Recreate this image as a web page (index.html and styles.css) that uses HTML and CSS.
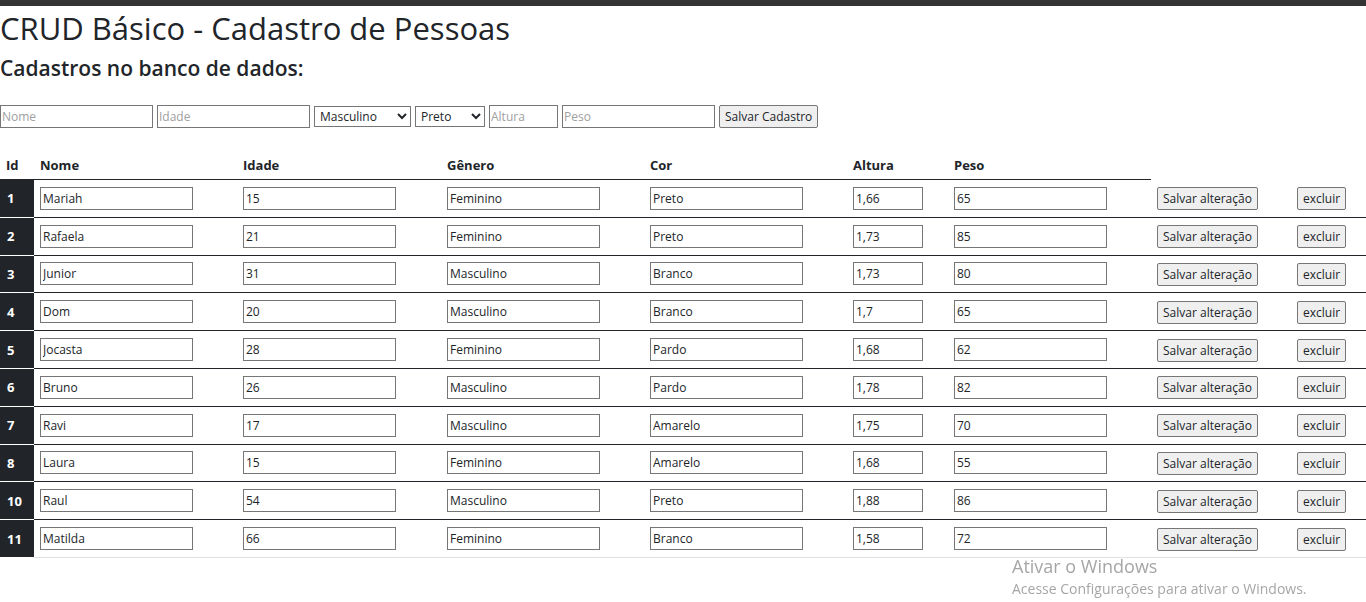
FILE: index.html
```html
<!DOCTYPE html>
<html lang="pt-BR">
<head>
<meta charset="utf-8">
<title>CRUD Básico</title>
<link rel="stylesheet" href="styles.css">
</head>
<body>
<h1 class="title">CRUD Básico - Cadastro de Pessoas</h1>
<h2 class="subtitle">Cadastros no banco de dados:</h2>
<form class="new-form">
  <input class="f-in w153" type="text" placeholder="Nome">
  <input class="f-in w153" type="text" placeholder="Idade">
  <select class="f-sel w97"><option>Masculino</option><option>Feminino</option></select>
  <select class="f-sel w70"><option>Preto</option><option>Branco</option></select>
  <input class="f-in w69" type="text" placeholder="Altura">
  <input class="f-in w153" type="text" placeholder="Peso">
  <button class="btn" type="button">Salvar Cadastro</button>
</form>
<table class="grid">
  <colgroup>
    <col class="c-id"><col class="c-wide"><col class="c-idade"><col class="c-wide"><col class="c-wide"><col class="c-alt"><col class="c-wide"><col class="c-save"><col class="c-del">
  </colgroup>
  <thead>
    <tr><th>Id</th><th>Nome</th><th>Idade</th><th>Gênero</th><th>Cor</th><th>Altura</th><th>Peso</th></tr>
  </thead>
  <tbody>
    <tr><th>1</th><td><input class="t-in" value="Mariah"></td><td><input class="t-in" value="15"></td><td><input class="t-in" value="Feminino"></td><td><input class="t-in" value="Preto"></td><td><input class="t-in sm" value="1,66"></td><td><input class="t-in" value="65"></td><td><button class="btn" type="button">Salvar alteração</button></td><td><button class="btn" type="button">excluir</button></td></tr>
    <tr><th>2</th><td><input class="t-in" value="Rafaela"></td><td><input class="t-in" value="21"></td><td><input class="t-in" value="Feminino"></td><td><input class="t-in" value="Preto"></td><td><input class="t-in sm" value="1,73"></td><td><input class="t-in" value="85"></td><td><button class="btn" type="button">Salvar alteração</button></td><td><button class="btn" type="button">excluir</button></td></tr>
    <tr><th>3</th><td><input class="t-in" value="Junior"></td><td><input class="t-in" value="31"></td><td><input class="t-in" value="Masculino"></td><td><input class="t-in" value="Branco"></td><td><input class="t-in sm" value="1,73"></td><td><input class="t-in" value="80"></td><td><button class="btn" type="button">Salvar alteração</button></td><td><button class="btn" type="button">excluir</button></td></tr>
    <tr><th>4</th><td><input class="t-in" value="Dom"></td><td><input class="t-in" value="20"></td><td><input class="t-in" value="Masculino"></td><td><input class="t-in" value="Branco"></td><td><input class="t-in sm" value="1,7"></td><td><input class="t-in" value="65"></td><td><button class="btn" type="button">Salvar alteração</button></td><td><button class="btn" type="button">excluir</button></td></tr>
    <tr><th>5</th><td><input class="t-in" value="Jocasta"></td><td><input class="t-in" value="28"></td><td><input class="t-in" value="Feminino"></td><td><input class="t-in" value="Pardo"></td><td><input class="t-in sm" value="1,68"></td><td><input class="t-in" value="62"></td><td><button class="btn" type="button">Salvar alteração</button></td><td><button class="btn" type="button">excluir</button></td></tr>
    <tr><th>6</th><td><input class="t-in" value="Bruno"></td><td><input class="t-in" value="26"></td><td><input class="t-in" value="Masculino"></td><td><input class="t-in" value="Pardo"></td><td><input class="t-in sm" value="1,78"></td><td><input class="t-in" value="82"></td><td><button class="btn" type="button">Salvar alteração</button></td><td><button class="btn" type="button">excluir</button></td></tr>
    <tr><th>7</th><td><input class="t-in" value="Ravi"></td><td><input class="t-in" value="17"></td><td><input class="t-in" value="Masculino"></td><td><input class="t-in" value="Amarelo"></td><td><input class="t-in sm" value="1,75"></td><td><input class="t-in" value="70"></td><td><button class="btn" type="button">Salvar alteração</button></td><td><button class="btn" type="button">excluir</button></td></tr>
    <tr><th>8</th><td><input class="t-in" value="Laura"></td><td><input class="t-in" value="15"></td><td><input class="t-in" value="Feminino"></td><td><input class="t-in" value="Amarelo"></td><td><input class="t-in sm" value="1,68"></td><td><input class="t-in" value="55"></td><td><button class="btn" type="button">Salvar alteração</button></td><td><button class="btn" type="button">excluir</button></td></tr>
    <tr><th>10</th><td><input class="t-in" value="Raul"></td><td><input class="t-in" value="54"></td><td><input class="t-in" value="Masculino"></td><td><input class="t-in" value="Preto"></td><td><input class="t-in sm" value="1,88"></td><td><input class="t-in" value="86"></td><td><button class="btn" type="button">Salvar alteração</button></td><td><button class="btn" type="button">excluir</button></td></tr>
    <tr><th>11</th><td><input class="t-in" value="Matilda"></td><td><input class="t-in" value="66"></td><td><input class="t-in" value="Feminino"></td><td><input class="t-in" value="Branco"></td><td><input class="t-in sm" value="1,58"></td><td><input class="t-in" value="72"></td><td><button class="btn" type="button">Salvar alteração</button></td><td><button class="btn" type="button">excluir</button></td></tr>
  </tbody>
</table>
<div class="watermark">
  <div class="wm-title">Ativar o Windows</div>
  <div class="wm-sub">Acesse Configurações para ativar o Windows.</div>
</div>
</body>
</html>
```
FILE: styles.css
```css
html, body { background: #fff; }
body {
  margin: 0;
  border-top: 6px solid #343434;
  font-family: "Open Sans", "Noto Sans", sans-serif;
  color: #212529;
}
.title {
  margin: 3px 0 0;
  font-size: 31px;
  line-height: 38px;
  font-weight: 500;
}
.subtitle {
  margin: 8px 0 0;
  font-size: 21px;
  line-height: 26px;
  font-weight: 600;
}
.new-form {
  margin: 23px 0 0;
  display: flex;
  align-items: center;
  gap: 4px;
  height: 24px;
}
.f-in, .f-sel, .t-in, .btn {
  font-family: "Open Sans", "Noto Sans", sans-serif;
  font-size: 12px;
  color: #212529;
  box-sizing: border-box;
}
.f-in {
  height: 23px;
  border: 1px solid #767676;
  border-radius: 0;
  padding: 0 1px;
  margin: 0;
}
.f-in::placeholder { color: #a0a0a0; }
.f-sel {
  height: 21px;
  border: 1px solid #767676;
  border-radius: 0;
  background: #fff;
  padding: 0 0 0 1px;
  margin: 0;
}
.w153 { width: 153px; }
.w97 { width: 97px; }
.w70 { width: 70px; }
.w69 { width: 69px; }
.btn {
  height: 23px;
  padding: 0 5px;
  background: #efefef;
  border: 1px solid #767676;
  border-radius: 2px;
  margin: 0;
  white-space: nowrap;
}
.grid {
  margin-top: 22px;
  width: 1366px;
  border-collapse: collapse;
  table-layout: fixed;
}
.c-id { width: 34px; }
.c-wide { width: 203px; }
.c-idade { width: 204px; }
.c-alt { width: 101px; }
.c-save { width: 140px; }
.c-del { width: 75px; }
.grid thead th {
  height: 29px;
  padding: 0 6px;
  text-align: left;
  font-size: 13px;
  font-weight: 700;
  border-bottom: 1px solid #212529;
  vertical-align: middle;
}
.grid tbody th {
  background: #212529;
  color: #fff;
  text-align: left;
  font-size: 13px;
  font-weight: 700;
  padding: 0 7px;
  height: 36.8px;
  border-top: 1px solid #fff;
  vertical-align: middle;
}
.grid tbody td {
  padding: 0 6px;
  height: 36.8px;
  border-top: 1px solid #212529;
  vertical-align: middle;
}
.grid tbody tr:first-child th,
.grid tbody tr:first-child td { border-top: none; }
.grid tbody tr:last-child td { border-bottom: 1px solid #dee2e6; }
.t-in {
  width: 153px;
  height: 23px;
  border: 1px solid #767676;
  border-radius: 0;
  padding: 0 2px;
  margin: 0;
  display: block;
}
.t-in.sm { width: 70px; }
.watermark {
  position: fixed;
  left: 1012px;
  top: 555px;
  color: #a6a6a6;
  font-family: "Open Sans", "Noto Sans", sans-serif;
}
.wm-title { font-size: 18px; line-height: 22px; }
.wm-sub { font-size: 14px; line-height: 20px; margin-top: 2px; }
```
